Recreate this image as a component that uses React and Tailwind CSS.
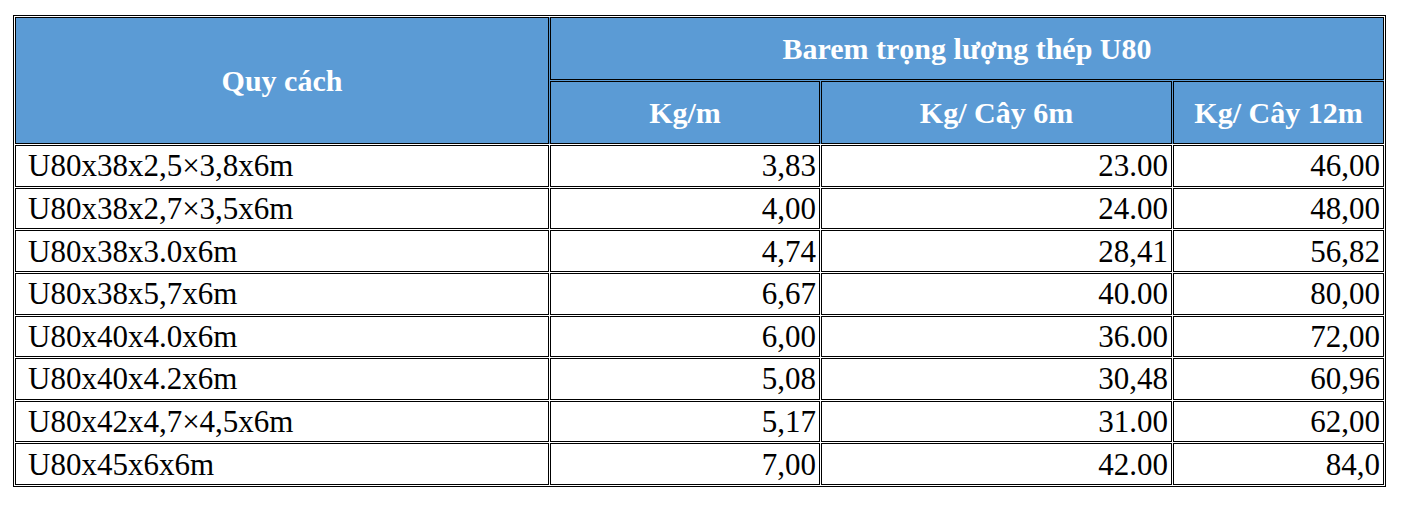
import React from 'react';

// Barem trọng lượng thép U80
const rows = [
  ['U80x38x2,5×3,8x6m', '3,83', '23.00', '46,00'],
  ['U80x38x2,7×3,5x6m', '4,00', '24.00', '48,00'],
  ['U80x38x3.0x6m', '4,74', '28,41', '56,82'],
  ['U80x38x5,7x6m', '6,67', '40.00', '80,00'],
  ['U80x40x4.0x6m', '6,00', '36.00', '72,00'],
  ['U80x40x4.2x6m', '5,08', '30,48', '60,96'],
  ['U80x42x4,7×4,5x6m', '5,17', '31.00', '62,00'],
  ['U80x45x6x6m', '7,00', '42.00', '84,0'],
];

const cols = 'grid-cols-[534px_270px_351px_211px]';

export default function App() {
  return (
    <div className="min-h-screen bg-white pl-[13px] pt-[15px] font-['Liberation_Serif','Times_New_Roman',serif]">
      <div className="flex w-[1373px] flex-col gap-px border border-black bg-white p-px">
        {/* Header */}
        <div className={`grid ${cols} grid-rows-[63px_63px] gap-px bg-[#5b9bd5] text-[30px] font-bold leading-none text-white`}>
          <div className="row-span-2 flex items-center justify-center border border-black bg-[#5b9bd5] pt-px">
            Quy cách
          </div>
          <div className="col-span-3 flex items-center justify-center border border-black bg-[#5b9bd5] pt-px">
            Barem trọng lượng thép U80
          </div>
          <div className="flex items-center justify-center border border-black bg-[#5b9bd5] pt-px">Kg/m</div>
          <div className="flex items-center justify-center border border-black bg-[#5b9bd5] pt-px">Kg/ Cây 6m</div>
          <div className="flex items-center justify-center border border-black bg-[#5b9bd5] pt-px">Kg/ Cây 12m</div>
        </div>

        {/* Body */}
        <div className={`grid ${cols} auto-rows-[41.625px] gap-px text-[31px] leading-none text-black`}>
          {rows.map((r) => (
            <React.Fragment key={r[0]}>
              <div className="flex items-center border border-black pl-3">{r[0]}</div>
              <div className="flex items-center justify-end border border-black pr-[3px]">{r[1]}</div>
              <div className="flex items-center justify-end border border-black pr-[3px]">{r[2]}</div>
              <div className="flex items-center justify-end border border-black pr-[3px]">{r[3]}</div>
            </React.Fragment>
          ))}
        </div>
      </div>
    </div>
  );
}
